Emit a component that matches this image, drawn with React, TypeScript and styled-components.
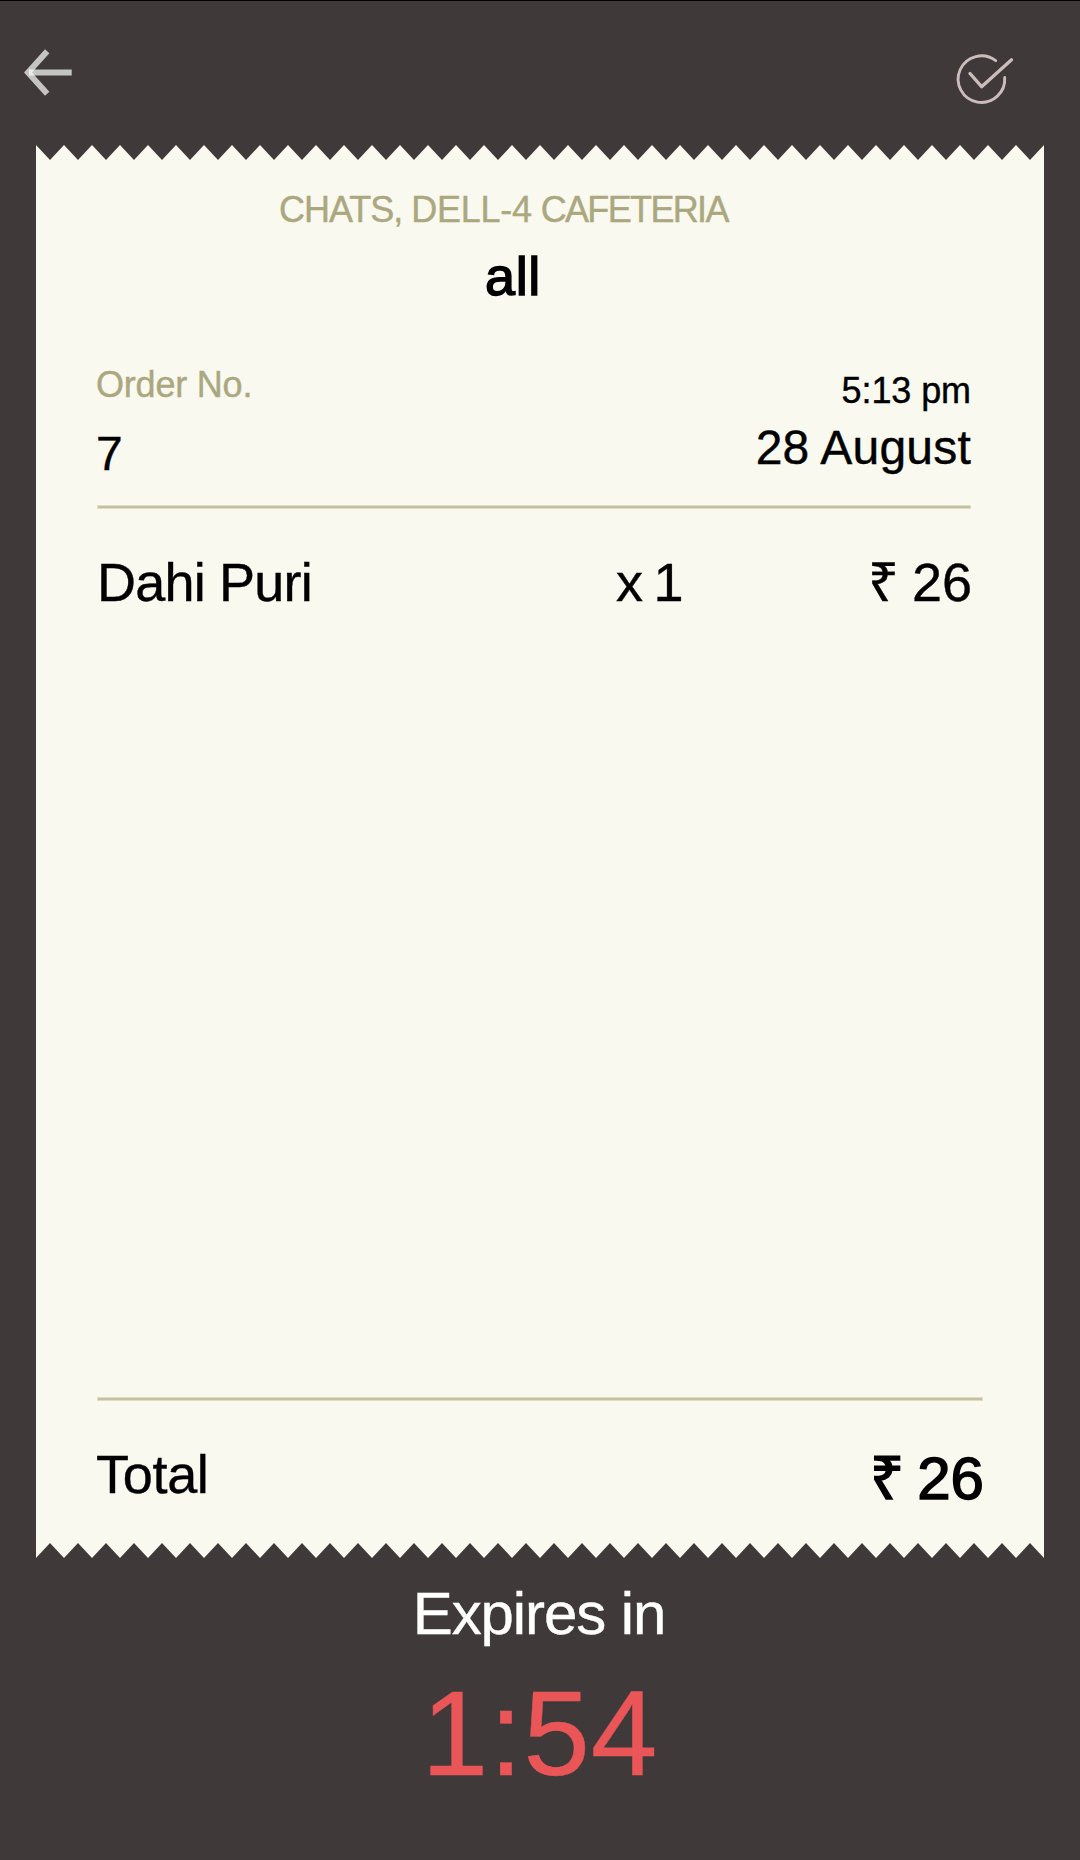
import React from "react";
import styled, { createGlobalStyle } from "styled-components";

const GlobalStyle = createGlobalStyle`
  html, body { margin: 0; padding: 0; background: #3f3a39; }
  *, *::before, *::after { box-sizing: border-box; }
`;

const TEETH = 36;
const TOOTH_WIDTH = 28;
const TOOTH_HEIGHT = 15;

/* Torn paper outline: peaks on the tooth boundaries, notches half way between. */
const tornEdge = (() => {
  const points: string[] = [];
  for (let i = 0; i <= TEETH * 2; i++) {
    points.push(`${(i * TOOTH_WIDTH) / 2}px ${i % 2 ? TOOTH_HEIGHT : 0}px`);
  }
  for (let i = TEETH * 2; i >= 0; i--) {
    const y = i % 2 ? `calc(100% - ${TOOTH_HEIGHT}px)` : "100%";
    points.push(`${(i * TOOTH_WIDTH) / 2}px ${y}`);
  }
  return `polygon(${points.join(", ")})`;
})();

const Screen = styled.main`
  display: flex;
  flex-direction: column;
  width: 1080px;
  height: 1860px;
  overflow: hidden;
  border-top: 1px solid #000;
  background: #3f3a39;
  color: #000;
  font-family: "Liberation Sans", Arial, sans-serif;
`;

const TopBar = styled.header`
  display: flex;
  justify-content: space-between;
  align-items: flex-start;
  height: 144px;
  padding: 44px 64px 0 20px;
`;

const IconButton = styled.button`
  display: block;
  padding: 0;
  border: 0;
  background: none;
  line-height: 0;
`;

const Receipt = styled.section`
  display: flex;
  flex-direction: column;
  height: 1413px;
  margin: 0 36px;
  padding: 44px 61px 46px;
  background: #f9f9ef;
  clip-path: ${tornEdge};
`;

const lineHeights = { 36: 41, 48: 53, 54: 60, 60: 67, 120: 134 };

const Text = styled.span<{
  $size: keyof typeof lineHeights;
  $color?: string;
  $track?: number;
  $word?: number;
  $start?: number;
  $strong?: boolean;
}>`
  display: block;
  font-size: ${(p) => p.$size}px;
  line-height: ${(p) => lineHeights[p.$size]}px;
  color: ${(p) => p.$color ?? "#000"};
  letter-spacing: ${(p) => p.$track ?? 0}px;
  word-spacing: ${(p) => p.$word ?? 0}px;
  margin-left: ${(p) => p.$start ?? 0}px;
  -webkit-text-stroke: ${(p) => (p.$strong ? 1.5 : 0.4)}px currentColor;
  white-space: nowrap;
`;

const Tracked = styled.span<{ $track: number }>`
  letter-spacing: ${(p) => p.$track}px;
`;

const Heading = styled.div`
  display: flex;
  flex-direction: column;
  gap: 16px;
`;

const Details = styled.div`
  display: flex;
  justify-content: space-between;
  margin: 58px 12px 25px 0;
`;

const Column = styled.div<{ $gap: number; $end?: boolean }>`
  display: flex;
  flex-direction: column;
  align-items: ${(p) => (p.$end ? "flex-end" : "flex-start")};
  gap: ${(p) => p.$gap}px;
  padding-top: ${(p) => (p.$end ? 6 : 0)}px;
`;

const Rule = styled.hr<{ $inset?: number }>`
  flex: none;
  height: 4px;
  margin: 0 ${(p) => p.$inset ?? 0}px 0 0;
  border: 1px solid #dedcc4;
  background: #c5c19c;
`;

const Items = styled.div`
  flex: 1;
  padding: 43px 11px 0 0;
`;

const Item = styled.div`
  display: grid;
  grid-template-columns: 519px 1fr auto;
`;

const TotalRow = styled.div`
  display: flex;
  justify-content: space-between;
  margin: 43px -1px 0 0;
  height: 68px;
`;

const Amount = styled.div`
  padding-top: 1px;
`;

const Expiry = styled.footer`
  display: flex;
  flex-direction: column;
  align-items: center;
  gap: 19px;
  padding-top: 22px;
`;

const MUTED = "#aba77f";

function BackIcon() {
  return (
    <svg width="56" height="56" viewBox="20 45 56 56" fill="none">
      <path d="M47.2 51.2 28 72.5 47.2 93.8" stroke="#fff" strokeOpacity=".7" strokeWidth="5.9" />
      <path d="M29 72.5H71.7" stroke="#fff" strokeOpacity=".7" strokeWidth="6.2" />
    </svg>
  );
}

function DoneIcon() {
  return (
    <svg width="64" height="64" viewBox="952 45 64 64" fill="none" stroke="#cdbcbc" strokeLinecap="round" strokeLinejoin="round">
      <path d="M995.7 60.7A23.3 23.3 0 1 0 1004.7 77.5" strokeWidth="2.9" />
      <path d="M970 73.5 981.6 86.7 1011.5 59.8" strokeWidth="3.3" />
    </svg>
  );
}

export default function App() {
  return (
    <>
      <GlobalStyle />
      <Screen>
        <TopBar>
          <IconButton aria-label="Back"><BackIcon /></IconButton>
          <IconButton aria-label="Done"><DoneIcon /></IconButton>
        </TopBar>
        <Receipt>
          <Heading>
            <Text $size={36} $color={MUTED} $track={-1} $start={182}>
              CHATS, <Tracked $track={-0.3}>DELL-4</Tracked> <Tracked $track={-1.65}>CAFETERIA</Tracked>
            </Text>
            <Text $size={54} $start={388} $track={0.6} $strong>all</Text>
          </Heading>
          <Details>
            <Column $gap={22}>
              <Text $size={36} $color={MUTED} $track={-0.2} $start={-1}>Order No.</Text>
              <Text $size={48} $start={-1}>7</Text>
            </Column>
            <Column $gap={10} $end>
              <Text $size={36} $track={-0.1}>5:13 pm</Text>
              <Text $size={48} $track={0.2}>28 August</Text>
            </Column>
          </Details>
          <Rule $inset={12} />
          <Items>
            <Item>
              <Text $size={54} $track={-0.8}>Dahi Puri</Text>
              <Text $size={54} $track={-1.2} $word={-2}>x 1</Text>
              <Text $size={54} $word={-2}>₹ 26</Text>
            </Item>
          </Items>
          <Rule />
          <TotalRow>
            <Text $size={54} $start={-1} $track={-0.3}>Total</Text>
            <Amount><Text $size={60} $word={-3} $strong>₹ 26</Text></Amount>
          </TotalRow>
        </Receipt>
        <Expiry>
          <Text $size={60} $color="#fff" $track={-1.1} $start={-2}>Expires in</Text>
          <Text $size={120} $color="#ea5657" $track={0.8}>1:54</Text>
        </Expiry>
      </Screen>
    </>
  );
}
